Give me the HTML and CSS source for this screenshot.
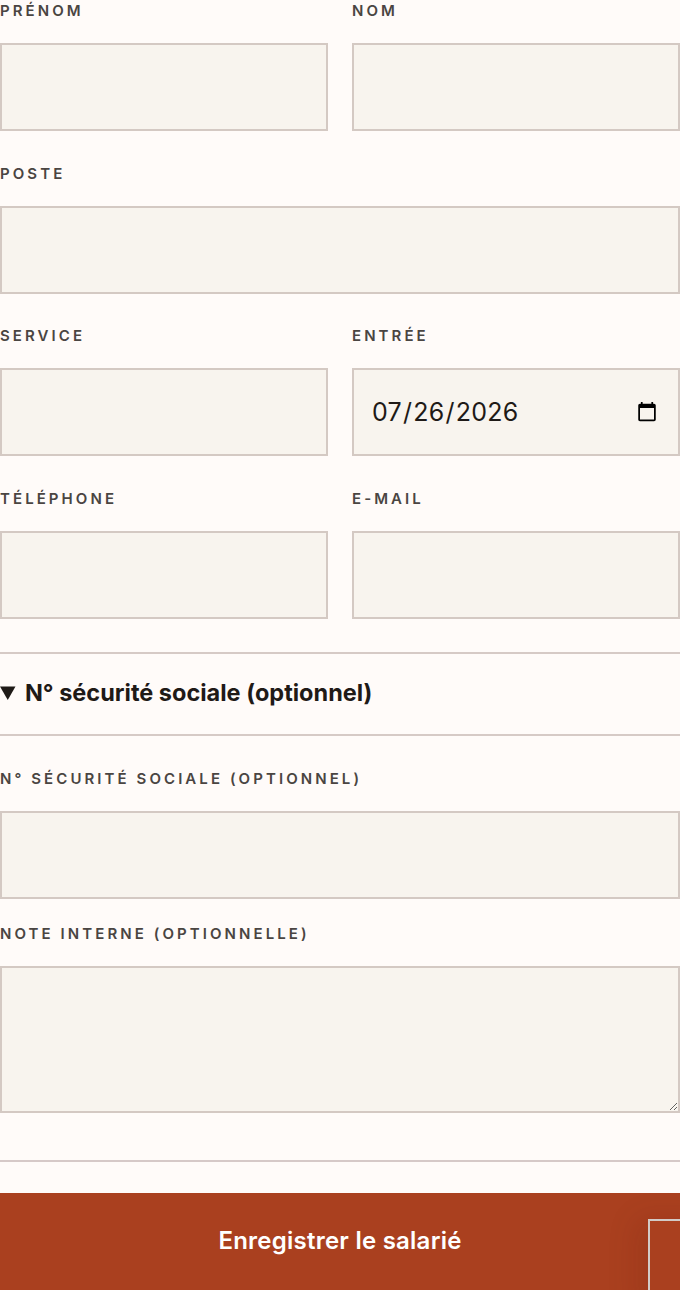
FILE: index.html
```html
<!DOCTYPE html>
<html lang="fr">
<head>
<meta charset="utf-8">
<title>Nouveau salarié</title>
<link rel="stylesheet" href="styles.css">
</head>
<body>
<form class="form">
  <div class="row two">
    <div class="field"><label class="label">Prénom</label><input class="input" type="text"></div>
    <div class="field"><label class="label">Nom</label><input class="input" type="text"></div>
  </div>
  <div class="row">
    <div class="field"><label class="label">Poste</label><input class="input" type="text"></div>
  </div>
  <div class="row two">
    <div class="field"><label class="label">Service</label><input class="input" type="text"></div>
    <div class="field"><label class="label">Entrée</label><input class="input date" type="date" value="2026-07-26"></div>
  </div>
  <div class="row two">
    <div class="field"><label class="label">Téléphone</label><input class="input" type="tel"></div>
    <div class="field"><label class="label">E-mail</label><input class="input" type="email"></div>
  </div>

  <details class="extra" open>
    <summary class="extra-summary">N° sécurité sociale (optionnel)</summary>
    <div class="extra-body">
      <div class="field"><label class="label">N° sécurité sociale (optionnel)</label><input class="input" type="text"></div>
    </div>
  </details>

  <div class="field note">
    <label class="label">Note interne (optionnelle)</label>
    <textarea class="input textarea"></textarea>
  </div>

  <hr class="divider">

  <button class="submit" type="submit">Enregistrer le salarié</button>
</form>
<div class="floater"></div>
</body>
</html>
```

FILE: styles.css
```css
html, body {
  margin: 0;
  padding: 0;
  background: #fffbf9;
}
body {
  font-family: Inter, "Liberation Sans", sans-serif;
  color: #1f1a17;
  position: relative;
  height: 1290px;
  overflow: hidden;
}
.form {
  display: flex;
  flex-direction: column;
  padding-top: 2px;
}
.row {
  display: grid;
  grid-template-columns: 1fr;
  margin-bottom: 33.67px;
}
.row.two {
  grid-template-columns: 1fr 1fr;
  column-gap: 24px;
}
.row:nth-of-type(4) {
  margin-bottom: 33px;
}
.field {
  display: flex;
  flex-direction: column;
}
.label {
  display: block;
  font-size: 15px;
  line-height: 18px;
  font-weight: 600;
  letter-spacing: 0.205em;
  text-transform: uppercase;
  color: #4a4542;
  margin-bottom: 23px;
}
.input {
  box-sizing: border-box;
  height: 88px;
  width: 100%;
  margin: 0;
  border: 2px solid #d4c9c3;
  border-radius: 0;
  background: #f8f4ee;
  font-family: Inter, "Liberation Sans", sans-serif;
  font-size: 25px;
  color: #1f1a17;
  padding: 0 16px;
  outline: none;
}
.date {
  padding-left: 17px;
  padding-right: 20px;
  letter-spacing: 0.01em;
}
.date::-webkit-calendar-picker-indicator {
  width: 22px;
  height: 22px;
  padding: 0;
  margin: 0;
}
.textarea {
  height: 147px;
  resize: vertical;
  padding: 12px 16px;
}
.extra {
  border-top: 2px solid #d6cac6;
}
.extra-summary {
  font-size: 23.5px;
  line-height: 26px;
  font-weight: 700;
  color: #1f1a17;
  padding: 26px 0 28px;
  border-bottom: 2px solid #d6cac6;
  cursor: pointer;
}
.extra-body {
  padding-top: 34px;
}
.note {
  margin-top: 26px;
}
.divider {
  border: 0;
  border-top: 2px solid #d6c9c8;
  margin: 47px 0 31px;
  height: 0;
}
.submit {
  height: 97px;
  width: 100%;
  border: 0;
  border-radius: 0;
  background: #aa401f;
  color: #ffffff;
  font-family: Inter, "Liberation Sans", sans-serif;
  font-size: 24px;
  font-weight: 600;
  letter-spacing: 0.01em;
  padding: 0 0 2px;
  cursor: pointer;
}
.floater {
  position: absolute;
  left: 648px;
  top: 1219px;
  width: 60px;
  height: 90px;
  border: 2px solid #d2cbc7;
  box-shadow: -12px 0 30px rgba(80, 20, 0, 0.12);
}
```
